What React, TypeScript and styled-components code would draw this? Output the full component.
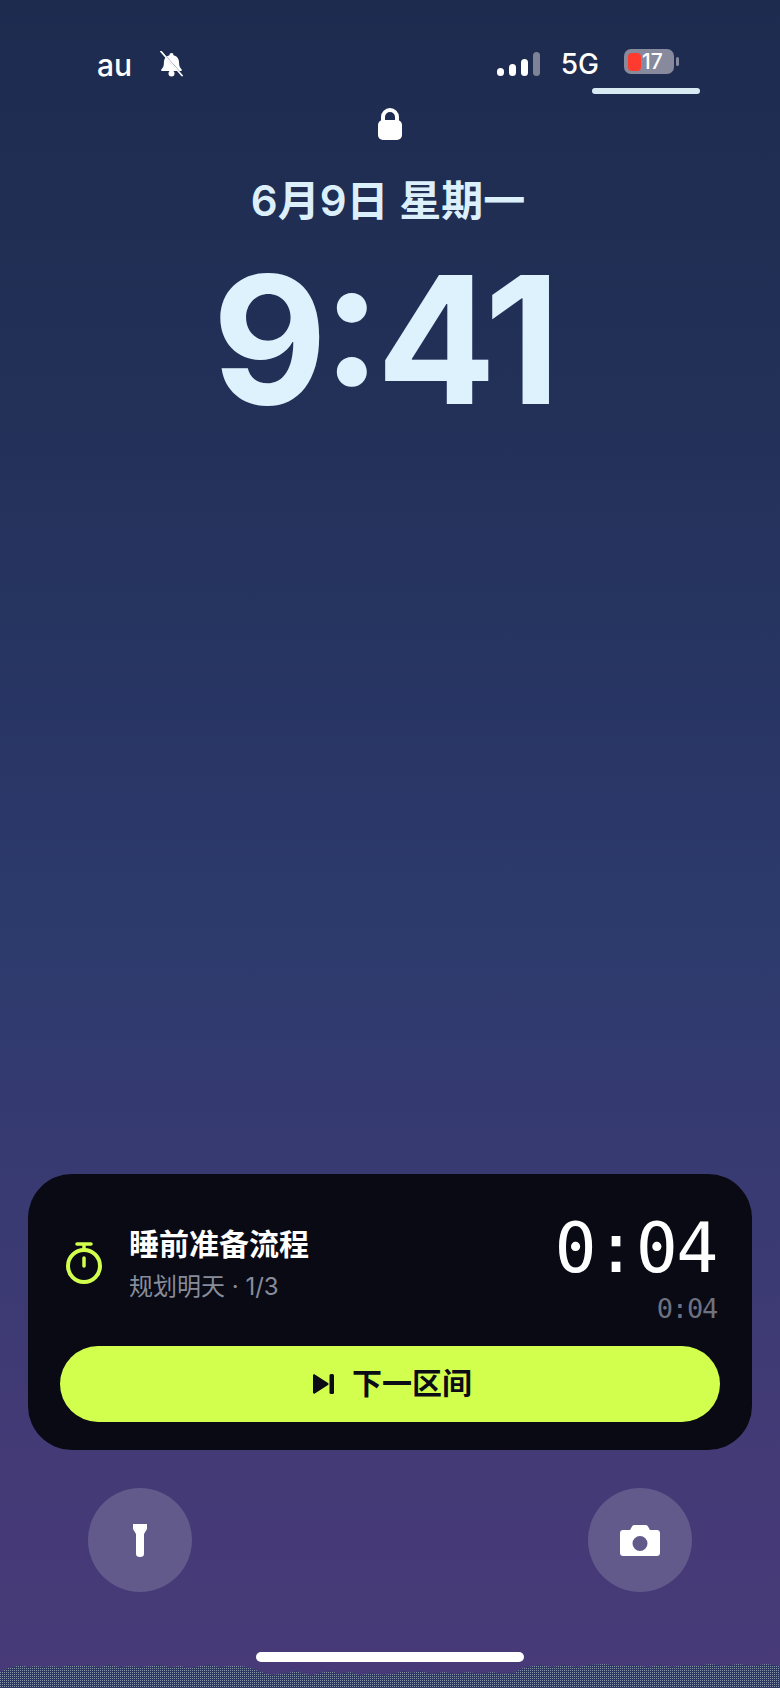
import styled, { createGlobalStyle } from "styled-components";

const GlobalStyle = createGlobalStyle`
  html, body {
    margin: 0;
    padding: 0;
    background: #1d2b4f;
  }
`;

const sansStack = `Inter, "Noto Sans CJK SC", sans-serif`;
const monoStack = `"DejaVu Sans Mono", monospace`;

const edgePoints =
  "0,1672 4,1670 8,1668 14,1667 20,1665 28,1667 36,1666 44,1667 52,1666 60,1667 70,1665 80,1666 88,1665 98,1667 110,1665 120,1667 130,1666 140,1667 150,1666 160,1665 170,1667 180,1666 190,1668 200,1666 210,1665 220,1667 230,1666 240,1666 248,1667 256,1670 264,1673 272,1675 280,1674 288,1673 296,1671 304,1674 312,1675 320,1673 330,1671 340,1674 350,1672 360,1675 372,1673 384,1675 396,1673 404,1671 412,1673 420,1671 432,1674 444,1672 456,1674 468,1672 480,1674 492,1672 504,1674 514,1673 520,1669 528,1667 540,1665 552,1667 564,1665 576,1667 590,1665 604,1664 618,1666 634,1665 648,1667 660,1665 672,1667 684,1665 696,1666 710,1664 724,1666 738,1664 752,1666 766,1664 780,1666 780,1688 0,1688";

const App = () => {
  return (
    <Page>
      <GlobalStyle />
      <StatusBar>
        <StatusLeft>
          <Carrier>au</Carrier>
          <svg width="23" height="26" viewBox="0 0 23 26">
            <path
              d="M11.500 2a2 2 0 0 1 2 2.200c3.800 1 5.600 3.800 5.600 7.800 0 3.200.9 4.800 2.400 6.200.7.800.3 1.800-.8 1.800H2.300c-1.100 0-1.500-1-.8-1.800C3 16.800 3.900 15.200 3.900 12c0-4 1.800-6.800 5.600-7.800a2 2 0 0 1 2-2.200z"
              fill="#fff"
            />
            <circle cx="11.500" cy="22.500" r="3" fill="#fff" />
            <path d="M3 2.500l19 21.500" stroke="#1e2b50" strokeWidth="1.500" />
            <path
              d="M1 .5l21 24"
              stroke="#fff"
              strokeWidth="1.800"
              strokeLinecap="round"
            />
          </svg>
        </StatusLeft>
        <StatusRight>
          <SignalBars>
            <SignalBar $height={8} />
            <SignalBar $height={12} />
            <SignalBar $height={17} />
            <SignalBar $height={24} $dim />
          </SignalBars>
          <NetworkLabel>5G</NetworkLabel>
          <Battery>
            <BatteryBody>
              <BatteryLevel />
              <BatteryText>17</BatteryText>
            </BatteryBody>
            <BatteryNub />
          </Battery>
        </StatusRight>
      </StatusBar>
      <IslandLine />
      <LockIcon>
        <svg width="24" height="32" viewBox="0 0 24 32">
          <path
            d="M5 15V9a7 7 0 0 1 14 0v6"
            fill="none"
            stroke="#fff"
            strokeWidth="4"
          />
          <rect x="0" y="12" width="24" height="20" rx="5" fill="#fff" />
        </svg>
      </LockIcon>
      <DateText>6月9日 星期一</DateText>
      <TimeText>9:41</TimeText>
      <Spacer />
      <TimerCard>
        <TimerHeader>
          <TimerInfo>
            <svg width="36" height="42" viewBox="0 0 36 42">
              <circle
                cx="18"
                cy="24"
                r="16"
                fill="none"
                stroke="#d2ff4d"
                strokeWidth="4"
              />
              <path
                d="M11 2h14M18 2v6M18 16v8"
                fill="none"
                stroke="#d2ff4d"
                strokeWidth="3.500"
                strokeLinecap="round"
              />
            </svg>
            <TimerLabels>
              <TimerTitle>睡前准备流程</TimerTitle>
              <TimerSubtitle>规划明天 · 1/3</TimerSubtitle>
            </TimerLabels>
          </TimerInfo>
          <TimerValues>
            <TimerMain>0:04</TimerMain>
            <TimerTotal>0:04</TimerTotal>
          </TimerValues>
        </TimerHeader>
        <NextButton>
          <svg width="21" height="20" viewBox="0 0 21 20">
            <path
              d="M0 1.500v17c0 1 1 1.500 1.800 1L15 11c.8-.5.8-1.500 0-2L1.800.5C1 0 0 .5 0 1.500z"
              fill="#0b0c16"
            />
            <rect x="16.500" y="0" width="4.500" height="20" rx="1.500" fill="#0b0c16" />
          </svg>
          <ButtonLabel>下一区间</ButtonLabel>
        </NextButton>
      </TimerCard>
      <QuickActions>
        <RoundAction>
          <svg width="14" height="33" viewBox="0 0 14 33">
            <path d="M0 0h14v5l-3 5v20a4 3 0 0 1-8 0V10L0 5z" fill="#fff" />
          </svg>
        </RoundAction>
        <RoundAction>
          <svg width="40" height="31" viewBox="0 0 40 31">
            <path
              fillRule="evenodd"
              d="M3 5h7l2-3.500C12.600.500 13.500 0 14.500 0h11c1 0 1.900.5 2.500 1.500L30 5h7c1.700 0 3 1.300 3 3v20c0 1.700-1.300 3-3 3H3c-1.700 0-3-1.300-3-3V8c0-1.700 1.300-3 3-3zM20 11a7.500 7.500 0 1 0 0 15 7.500 7.500 0 0 0 0-15z"
              fill="#fff"
            />
          </svg>
        </RoundAction>
      </QuickActions>
      <HomeBar />
      <BottomNoise viewBox="0 1660 780 28" width="780" height="28">
        <defs>
          <pattern id="dots" width="2" height="2" patternUnits="userSpaceOnUse">
            <rect width="2" height="2" fill="#2b3766" />
            <rect width="1" height="1" fill="#8793a3" />
          </pattern>
        </defs>
        <polygon points={edgePoints} fill="url(#dots)" />
      </BottomNoise>
    </Page>
  );
};

const Page = styled.div`
  position: relative;
  width: 780px;
  height: 1688px;
  padding-top: 40px;
  box-sizing: border-box;
  display: flex;
  flex-direction: column;
  overflow: hidden;
  font-family: ${sansStack};
  background: linear-gradient(
    180deg,
    #1d2b4f 0%,
    #233159 25%,
    #2a3768 48%,
    #2d3a6c 56%,
    #383a71 70%,
    #433a76 86%,
    #483a78 100%
  );
`;

const StatusBar = styled.div`
  height: 48px;
  padding: 0 101px 0 97px;
  display: flex;
  align-items: center;
  justify-content: space-between;
`;

const StatusLeft = styled.div`
  display: flex;
  align-items: center;
  gap: 28px;
`;

const Carrier = styled.span`
  padding-top: 2px;
  font-size: 30px;
  font-weight: 500;
  color: #fff;
`;

const StatusRight = styled.div`
  display: flex;
  align-items: center;
`;

const SignalBars = styled.div`
  display: flex;
  align-items: flex-end;
  gap: 5px;
  height: 24px;
`;

const SignalBar = styled.div<{ $height: number; $dim?: boolean }>`
  width: 7px;
  height: ${(props) => props.$height}px;
  border-radius: 3.5px;
  background: ${(props) => (props.$dim ? "#7d8294" : "#fff")};
`;

const NetworkLabel = styled.span`
  margin-left: 21px;
  font-size: 28px;
  font-weight: 500;
  color: #fff;
`;

const Battery = styled.div`
  margin-left: 25px;
  margin-bottom: 5px;
  display: flex;
  align-items: center;
  gap: 2px;
`;

const BatteryBody = styled.div`
  width: 50px;
  height: 25px;
  box-sizing: border-box;
  padding: 4px 3px 4px 4px;
  border-radius: 7px;
  background: #868a9c;
  display: flex;
  align-items: center;
  gap: 1px;
`;

const BatteryLevel = styled.div`
  width: 13px;
  height: 18px;
  border-radius: 4px;
  background: #ff3b30;
`;

const BatteryText = styled.span`
  font-size: 21px;
  font-weight: 500;
  color: #fff;
  line-height: 18px;
`;

const BatteryNub = styled.div`
  width: 3px;
  height: 9px;
  border-radius: 1.5px;
  background: #868a9c;
`;

const IslandLine = styled.div`
  align-self: flex-end;
  width: 108px;
  height: 6px;
  margin-right: 80px;
  border-radius: 3px;
  background: #d8eaf2;
`;

const LockIcon = styled.div`
  margin-top: 14px;
  height: 32px;
  display: flex;
  justify-content: center;
`;

const DateText = styled.div`
  margin-top: 37px;
  padding-right: 4px;
  height: 48px;
  line-height: 48px;
  text-align: center;
  font-size: 42px;
  font-weight: 600;
  color: #dcf0fc;
`;

const TimeText = styled.div`
  margin-top: 25px;
  padding-right: 12px;
  height: 180px;
  line-height: 180px;
  text-align: center;
  font-size: 177px;
  font-weight: 700;
  letter-spacing: -5px;
  font-feature-settings: "case";
  color: #def2fe;
`;

const Spacer = styled.div`
  flex: 1;
`;

const TimerCard = styled.div`
  margin: 0 28px;
  height: 276px;
  box-sizing: border-box;
  padding: 0 32px 28px;
  border-radius: 44px;
  background: #090a14;
  display: flex;
  flex-direction: column;
`;

const TimerHeader = styled.div`
  flex: 1;
  padding: 6px 3px 0 6px;
  display: flex;
  align-items: center;
  justify-content: space-between;
`;

const TimerInfo = styled.div`
  display: flex;
  align-items: center;
  gap: 27px;
`;

const TimerLabels = styled.div`
  display: flex;
  flex-direction: column;
  gap: 7px;
`;

const TimerTitle = styled.div`
  font-size: 30px;
  line-height: 40px;
  font-weight: 700;
  color: #fff;
`;

const TimerSubtitle = styled.div`
  font-size: 24px;
  line-height: 32px;
  color: #878c9b;
`;

const TimerValues = styled.div`
  padding-top: 7px;
  display: flex;
  flex-direction: column;
  align-items: flex-end;
  gap: 4px;
`;

const TimerMain = styled.div`
  font-family: ${monoStack};
  font-size: 70px;
  line-height: 80px;
  letter-spacing: -1.5px;
  color: #fff;
`;

const TimerTotal = styled.div`
  font-family: ${monoStack};
  font-size: 27px;
  line-height: 34px;
  letter-spacing: -1.2px;
  color: #6d7282;
`;

const NextButton = styled.button`
  height: 76px;
  padding: 0 0 0 5px;
  border: none;
  border-radius: 38px;
  background: #d2ff4d;
  display: flex;
  align-items: center;
  justify-content: center;
  gap: 18px;
  font-family: ${sansStack};
  font-size: 30px;
  font-weight: 700;
  color: #0b0c16;
`;

const ButtonLabel = styled.span`
  margin-bottom: 6px;
`;

const QuickActions = styled.div`
  margin-top: 38px;
  padding: 0 88px;
  display: flex;
  justify-content: space-between;
`;

const RoundAction = styled.div`
  width: 104px;
  height: 104px;
  border-radius: 50%;
  background: #625a8b;
  display: flex;
  align-items: center;
  justify-content: center;
`;

const HomeBar = styled.div`
  align-self: center;
  margin: 60px 0 26px;
  width: 268px;
  height: 10px;
  border-radius: 5px;
  background: #fff;
`;

const BottomNoise = styled.svg`
  position: absolute;
  left: 0;
  bottom: 0;
`;

export default App;
